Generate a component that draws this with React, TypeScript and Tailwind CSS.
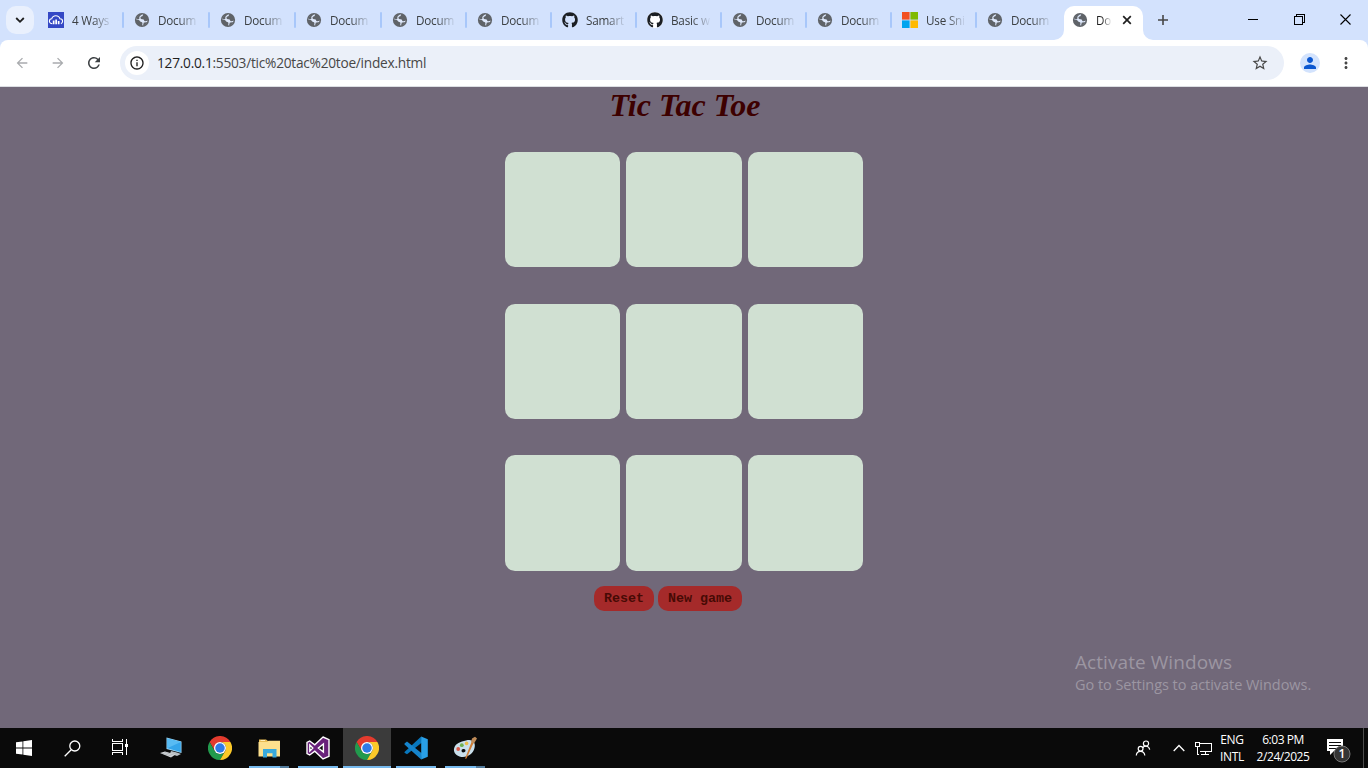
import React from "react";
import { FaGithub } from "react-icons/fa";
import { MdArrowBack, MdArrowForward, MdRefresh, MdInfoOutline, MdStarOutline, MdMoreVert, MdPerson } from "react-icons/md";

const SANS = "font-['Open_Sans','Noto_Sans',sans-serif]";

function Globe() {
  return (
    <svg viewBox="0 0 16 16" className="size-4">
      <circle cx="8" cy="8" r="7.1" fill="#5f6368" />
      <path
        d="M9.2 2.5 C8.6 3.6 8.9 4.1 7.4 4.5 C6.6 4.8 6.3 5.6 6.6 6.4 C7.2 7.4 8.8 6.8 9.6 7.4 C10.3 8 10 9 11 9.2 C12 9.4 12.8 8.8 13.6 8.6 C13.2 11.2 11.2 13.3 8.4 13.6 C8 12.6 8.6 11.8 8.4 10.8 C8.1 9.8 6.6 10.2 6 9.2 C5.6 8.3 4.2 8 2.3 7.6 C2.6 6.5 3 5.6 3.4 5 C4.6 3.2 6.6 2.2 9.2 2.5 Z"
        fill="#dfe9fc"
      />
      <path d="M3 5.2 C4 3.3 6 2 8 2.1 C7.6 3 6.9 3.4 6.1 4 C5.2 4.7 5.3 5.7 5.4 6.7 C4.6 7.4 3.3 7.2 2.4 7 Z" fill="#5f6368" />
      <path d="M9.8 10.4 C10.8 10.6 12 10.4 13.3 10 C12.4 12 10.8 13.3 8.9 13.8 C9.4 12.7 9.3 11.6 9.8 10.4 Z" fill="#5f6368" />
    </svg>
  );
}

function CloudIcon() {
  return (
    <svg viewBox="0 0 16 16" className="size-4">
      <rect width="16" height="16" fill="#3448c5" />
      <path d="M4.3 11.6 C2.4 11.6 1.4 10.4 1.4 9.2 C1.4 7.8 2.5 6.9 3.7 6.8 C4.2 4.9 5.8 3.7 7.8 3.7 C9.8 3.7 11.5 4.9 12 6.8 C13.6 6.9 14.6 8 14.6 9.3 C14.6 10.4 13.9 11.3 12.9 11.6" fill="none" stroke="#fff" strokeWidth="1.1" />
      <path d="M4.8 8.6 h1.7 v3.7 h-1.7z M7.3 7.4 h1.7 v4.9 h-1.7z M9.8 9.1 h1.7 v3.2 h-1.7z" fill="#fff" />
    </svg>
  );
}

function MsIcon() {
  return (
    <svg viewBox="0 0 16 16" className="size-4">
      <path d="M0 0h7.6v7.6H0z" fill="#f25022" />
      <path d="M8.4 0H16v7.6H8.4z" fill="#7fba00" />
      <path d="M0 8.4h7.6V16H0z" fill="#00a4ef" />
      <path d="M8.4 8.4H16V16H8.4z" fill="#ffb900" />
    </svg>
  );
}

const github = <FaGithub className="size-4 text-[#1b1f24]" />;

const tabs: { icon: React.ReactNode; title: string }[] = [
  { icon: <CloudIcon />, title: "4 Ways" },
  { icon: <Globe />, title: "Docum" },
  { icon: <Globe />, title: "Docum" },
  { icon: <Globe />, title: "Docum" },
  { icon: <Globe />, title: "Docum" },
  { icon: <Globe />, title: "Docum" },
  { icon: github, title: "Samart" },
  { icon: <span className="flex rounded-full bg-white">{github}</span>, title: "Basic w" },
  { icon: <Globe />, title: "Docum" },
  { icon: <Globe />, title: "Docum" },
  { icon: <MsIcon />, title: "Use Sni" },
  { icon: <Globe />, title: "Docum" },
];

function TabStrip() {
  return (
    <div className="flex h-10 bg-[#d3e2fd]">
      <div className="flex w-10 shrink-0 pl-1.5 pt-1.5">
        <div className="flex size-7 items-center justify-center rounded-[10px] bg-[#e9f0fd]">
          <svg viewBox="0 0 10 10" className="size-2.5" fill="none" stroke="#1f1f1f" strokeWidth="1.8">
            <path d="M1.2 3 L5 6.8 L8.8 3" />
          </svg>
        </div>
      </div>
      {tabs.map((t, i) => (
        <div key={i} className={i < 4 ? "flex h-10 w-[86px] shrink-0 items-center pl-2" : "flex h-10 w-[85px] shrink-0 items-center pl-2"}>
          <div className="shrink-0">{t.icon}</div>
          <div className="ml-2 w-[41px] whitespace-nowrap pt-0.5 text-[11.7px] tracking-[-0.2px] text-[#3c4043] [mask-image:linear-gradient(to_right,#000_50%,transparent_98%)]">
            {t.title}
          </div>
          {i < 11 && <div className={i < 4 ? "ml-[9px] h-4 w-0.5 rounded-full bg-[#a8c7fa]" : "ml-2 h-4 w-0.5 rounded-full bg-[#a8c7fa]"} />}
        </div>
      ))}
      <div className="relative mt-1.5 flex h-[34px] w-[79px] shrink-0 items-center rounded-t-[10px] bg-white pb-1.5 pl-2">
        <svg viewBox="0 0 10 10" className="absolute -left-2.5 bottom-0 size-2.5">
          <path d="M10 0 V10 H0 A10 10 0 0 0 10 0" fill="#fff" />
        </svg>
        <svg viewBox="0 0 10 10" className="absolute -right-2.5 bottom-0 size-2.5">
          <path d="M0 0 V10 H10 A10 10 0 0 1 0 0" fill="#fff" />
        </svg>
        <Globe />
        <div className="ml-2 w-4 whitespace-nowrap pt-0.5 text-[11.7px] tracking-[-0.2px] text-[#1f1f1f] [mask-image:linear-gradient(to_right,#000_35%,transparent)]">
          Do
        </div>
        <svg viewBox="0 0 10 10" className="ml-2.5 size-2.5" stroke="#1f1f1f" strokeWidth="1.7">
          <path d="M1.2 1.2 L8.8 8.8 M8.8 1.2 L1.2 8.8" />
        </svg>
      </div>
      <svg viewBox="0 0 12 12" className="ml-[14px] mt-[14px] size-3" stroke="#474747" strokeWidth="1.6">
        <path d="M6 1 V11 M1 6 H11" />
      </svg>
      <div className="ml-auto mr-[17px] flex h-10 items-center gap-[35px] pb-px">
        <svg viewBox="0 0 11 11" className="size-[11px]" stroke="#000" shapeRendering="crispEdges">
          <path d="M0 5.5 H10" />
        </svg>
        <svg viewBox="0 0 11 11" className="size-[11px]" fill="none" stroke="#000" shapeRendering="crispEdges">
          <path d="M0.5 2.5 H8.5 V10.5 H0.5 Z M2.5 2.5 V0.5 H10.5 V8.5 H8.5" />
        </svg>
        <svg viewBox="0 0 11 11" className="size-[11px]" stroke="#000" strokeWidth="1.1">
          <path d="M0.5 0.5 L10.5 10.5 M10.5 0.5 L0.5 10.5" />
        </svg>
      </div>
    </div>
  );
}

function Toolbar() {
  return (
    <div className="bg-[#d3e2fd]">
      <div className="flex h-[47px] items-center rounded-t-lg border-b border-[#dcdee3] bg-white pl-[14px]">
        <MdArrowBack className="size-4 text-[#a9abae]" />
        <MdArrowForward className="ml-5 size-4 text-[#a9abae]" />
        <MdRefresh className="ml-[19px] size-[18px] text-[#3c4043]" />
        <div className="ml-[17px] flex h-[34px] w-[1164px] items-center rounded-full bg-[#ebf0f9] pl-[5px]">
          <div className="flex size-6 items-center justify-center rounded-full bg-white">
            <MdInfoOutline className="size-4 text-[#1f1f1f]" />
          </div>
          <div className="ml-2 whitespace-nowrap text-[13.7px] tracking-[-0.25px] text-[#474747]">
            <span className="text-[#1f1f1f]">127.0.0.1</span>:5503/tic%20tac%20toe/index.html
          </div>
          <MdStarOutline className="ml-auto mr-[15px] size-[18px] text-[#474747]" />
        </div>
        <div className="ml-4 flex size-5 items-center justify-center rounded-full bg-[#d3e3fd]">
          <MdPerson className="size-[18px] text-[#0b57d0]" />
        </div>
        <MdMoreVert className="ml-[17px] size-[18px] text-[#474747]" />
      </div>
    </div>
  );
}

function Game() {
  return (
    <main className="relative h-[641px] bg-[#716879]">
      <h1 className="pb-px pl-0.5 text-center font-['Liberation_Serif',serif] text-[32px] font-bold italic leading-[37px] text-[#3d0000]">
        Tic Tac Toe
      </h1>
      <div className="mx-auto mt-[27px] grid w-[358.4px] grid-cols-3 gap-x-[6.2px] gap-y-[36.3px]">
        {Array.from({ length: 9 }, (_, i) => (
          <button key={i} className="h-[115.4px] rounded-[10px] bg-[#d0e0d2]" />
        ))}
      </div>
      <div className="ml-[594px] mt-[15px] flex gap-1 font-['Liberation_Mono',monospace] text-[13.333px] font-bold leading-[15px] text-[#470a05]">
        <button className="h-[25px] w-[60px] whitespace-nowrap rounded-[10px] bg-[#a52a2a]">Reset</button>
        <button className="h-[25px] w-[84px] whitespace-nowrap rounded-[10px] bg-[#a52a2a]">New game</button>
      </div>
      <div className="absolute left-[1075px] top-[562px] whitespace-nowrap text-[#9c96a2]">
        <div className="text-[19px] leading-[26px] tracking-[0.07px]">Activate Windows</div>
        <div className="text-[14.5px] leading-5 tracking-[-0.04px]">Go to Settings to activate Windows.</div>
      </div>
    </main>
  );
}

function Chrome() {
  return (
    <svg viewBox="0 0 48 48" className="size-6">
      <path d="M3.2 12 A24 24 0 0 1 44.8 12 H24 L13.6 30 Z" fill="#e33b2e" />
      <path d="M3.2 12 L13.6 30 A12 12 0 0 0 34.4 30 L24 48 A24 24 0 0 1 3.2 12" fill="#229a4d" />
      <path d="M44.8 12 A24 24 0 0 1 24 48 L34.4 30 A12 12 0 0 0 24 12 Z" fill="#fcc929" />
      <circle cx="24" cy="24" r="12" fill="#fff" />
      <circle cx="24" cy="24" r="9.5" fill="#2f7be8" />
    </svg>
  );
}

function Computer() {
  return (
    <svg viewBox="0 0 24 24" className="size-6">
      <path d="M7.5 1.5 L22.5 5.5 V17 L7.5 13 Z" fill="#9ed8f7" />
      <path d="M8.3 2.5 L21.8 6.1 V16 L8.3 12.3 Z" fill="#35a5ea" />
      <path d="M8.3 2.5 L21.8 6.1 L8.3 12.3 Z" fill="#58bbf3" />
      <path d="M12 15 L18 16.6 L22 18 L18 20 L11 17.6 Z" fill="#b9bec2" />
      <path d="M1 17 L6 15.5 L16.5 18.5 L12 21.5 Z" fill="#d9dcdf" />
      <path d="M3 17.2 L13 20.2 M5.5 16.3 L15 19.1" stroke="#9ba1a6" strokeWidth=".6" />
    </svg>
  );
}

function Folder() {
  return (
    <svg viewBox="0 0 24 24" className="size-6">
      <path d="M2 3.5 H9 L11 5 H22.5 V20 H2 Z" fill="#e9bd55" />
      <path d="M1.5 6 H10 L11.5 4.8 H23 V20.5 H1.5 Z" fill="#fde08d" />
      <path d="M3.5 4.5 H8" stroke="#fff0ba" />
      <path d="M6 13 H19.5 V21.5 H15.5 V17.3 H10 V21.5 H6 Z" fill="#38a9dc" />
    </svg>
  );
}

function VisualStudio() {
  return (
    <svg viewBox="0 0 24 24" className="size-6">
      <path
        d="M17 1 L23 3.7 V20.3 L17 23 L8.8 15.2 L3.7 19 L1 17.5 V6.5 L3.7 5 L8.8 8.8 Z M3.8 9 V15 L6.8 12 Z M12.4 12 L17.4 16 V8 Z"
        fill="#68217a"
        fillRule="evenodd"
        stroke="#fff"
        strokeWidth="1.4"
      />
    </svg>
  );
}

function VsCode() {
  return (
    <svg viewBox="0 0 24 24" className="size-6">
      <path d="M17.2 .5 L18 6.5 L3 18.3 L.5 16.7 V15.9 Z" fill="#0877bd" />
      <path d="M.5 7.6 L3 5.6 L18 17.4 L17.2 23.5 L.5 8.5 Z" fill="#1684cc" />
      <path d="M17.2 .5 L23.8 3.3 V20.7 L17.2 23.5 Z" fill="#29a0e8" />
    </svg>
  );
}

function Paint() {
  return (
    <svg viewBox="0 0 24 24" className="size-6">
      <path d="M13 4.5 C20 2.5 23 7 21.5 12 C20 18.5 13 22.5 6.5 20.5 C2 19 .2 15.5 1.2 12 C2.4 7.5 7.5 5.5 13 4.5 Z M11 13 A2 1.7 0 1 0 11 16.3 A2 1.7 0 0 0 11 13" fill="#c9dfeb" fillRule="evenodd" />
      <circle cx="5.2" cy="13" r="1.9" fill="#d95a4b" />
      <circle cx="8.8" cy="9.2" r="1.9" fill="#70b150" />
      <circle cx="13.6" cy="7.4" r="1.8" fill="#edbc48" />
      <path d="M18.5 6 L20.5 7 L13.5 22.5 L12 22.8 Z" fill="#cf7d36" />
      <path d="M18 6.2 L19 2.5 L22 .8 L24 2.5 L21 7.5 Z" fill="#bf8b58" />
    </svg>
  );
}

const apps = [
  { icon: <Computer />, state: "" },
  { icon: <Chrome />, state: "" },
  { icon: <Folder />, state: "stack" },
  { icon: <VisualStudio />, state: "open" },
  { icon: <Chrome />, state: "active" },
  { icon: <VsCode />, state: "open" },
  { icon: <Paint />, state: "stack" },
];

function Taskbar() {
  return (
    <div className="flex h-10 bg-[#0a0a0a] text-white">
      <div className="flex h-10 w-12 items-center justify-center">
        <svg viewBox="0 0 16 16" className="size-4" fill="#fff">
          <path d="M0 2.3 L6.5 1.4 V7.6 H0 Z M7.3 1.2 L16 0 V7.6 H7.3 Z M0 8.4 H6.5 V14.6 L0 13.7 Z M7.3 8.4 H16 V16 L7.3 14.8 Z" />
        </svg>
      </div>
      <div className="flex h-10 w-12 items-center justify-center">
        <svg viewBox="0 0 17 17" className="size-[17px]" fill="none" stroke="#fff" strokeWidth="1.3">
          <circle cx="10.8" cy="6" r="5" />
          <path d="M7.2 9.7 L.7 16.2" />
        </svg>
      </div>
      <div className="flex h-10 w-12 items-center justify-center pb-0.5">
        <svg viewBox="0 0 16 16" className="size-4" fill="none" stroke="#fff" shapeRendering="crispEdges">
          <path d="M.5 0 V2.5 H10.5 V0 M.5 4.5 H10.5 V11.5 H.5 Z M.5 16 V13.5 H10.5 V16 M14.5 0 V16" />
          <path d="M13 4.5 H16 V7.5 H13 Z" fill="#fff" stroke="none" />
        </svg>
      </div>
      <div className="ml-[3px] flex gap-px">
        {apps.map((a, i) => (
          <div key={i} className={a.state === "active" ? "flex h-10 w-12 flex-col items-center bg-[#3b3b3b]" : "flex h-10 w-12 flex-col items-center"}>
            <div className="flex h-[38px] items-center pt-0.5">{a.icon}</div>
            {a.state === "active" && <div className="h-0.5 w-12 bg-[#76b9ed]" />}
            {a.state === "open" && <div className="h-0.5 w-10 bg-[#76b9ed]" />}
            {a.state === "stack" && (
              <div className="flex h-0.5 w-10">
                <div className="w-[31px] bg-[#76b9ed]" />
                <div className="w-[9px] bg-[#527b9c]" />
              </div>
            )}
          </div>
        ))}
      </div>
      <div className="ml-auto flex h-10 items-center">
        <svg viewBox="0 0 16 16" className="size-4" fill="none" stroke="#fff" strokeWidth="1.2">
          <circle cx="11" cy="3.6" r="2.6" />
          <path d="M7.8 7.9 C9 5.6 13.8 5.2 14.7 9.6" />
          <circle cx="5.6" cy="8.8" r="2.4" />
          <path d="M1.3 15.5 C1.6 10 9.3 10 9.8 15.5" />
        </svg>
        <svg viewBox="0 0 12 8" className="ml-[22px] h-2 w-3" fill="none" stroke="#fff" strokeWidth="1.3">
          <path d="M.7 7 L6 1.5 L11.3 7" />
        </svg>
        <svg viewBox="0 0 17 14" className="ml-2.5 mt-0.5 h-3.5 w-[17px]" fill="none" stroke="#fff" shapeRendering="crispEdges">
          <path d="M5 1.5 H16.5 V9.5 H4.5 M.5 .5 H4.5 V4.5 H.5 Z M2.5 4.5 V12.5 H4 M10.5 9.5 V12.5 M6 12.5 H14" />
        </svg>
        <div className="ml-1.5 w-7 whitespace-nowrap text-center text-[12px] leading-[17px] tracking-[-0.3px]">
          <div>ENG</div>
          <div>INTL</div>
        </div>
        <div className="ml-2 w-[58px] whitespace-nowrap text-center text-[12px] leading-[17px] tracking-[-0.45px]">
          <div>6:03 PM</div>
          <div>2/24/2025</div>
        </div>
        <svg viewBox="0 0 26 26" className="ml-[13px] mt-1 size-[26px]">
          <path d="M2 2 H18 V14 H9 L5 18 V14 H2 Z" fill="#fff" />
          <path d="M4 5.5 H16 M4 8.5 H16 M4 11.5 H12" stroke="#0a0a0a" />
          <circle cx="17" cy="17" r="8" fill="#353535" stroke="#777" />
          <text x="17" y="21.3" textAnchor="middle" fill="#fff" fontSize="12" fontWeight="600">1</text>
        </svg>
        <div className="ml-3 mr-1 h-10 w-px bg-[#4c4c4c]" />
      </div>
    </div>
  );
}

export default function App() {
  return (
    <div className={`h-[768px] w-[1368px] overflow-hidden ${SANS}`}>
      <TabStrip />
      <Toolbar />
      <Game />
      <Taskbar />
    </div>
  );
}
